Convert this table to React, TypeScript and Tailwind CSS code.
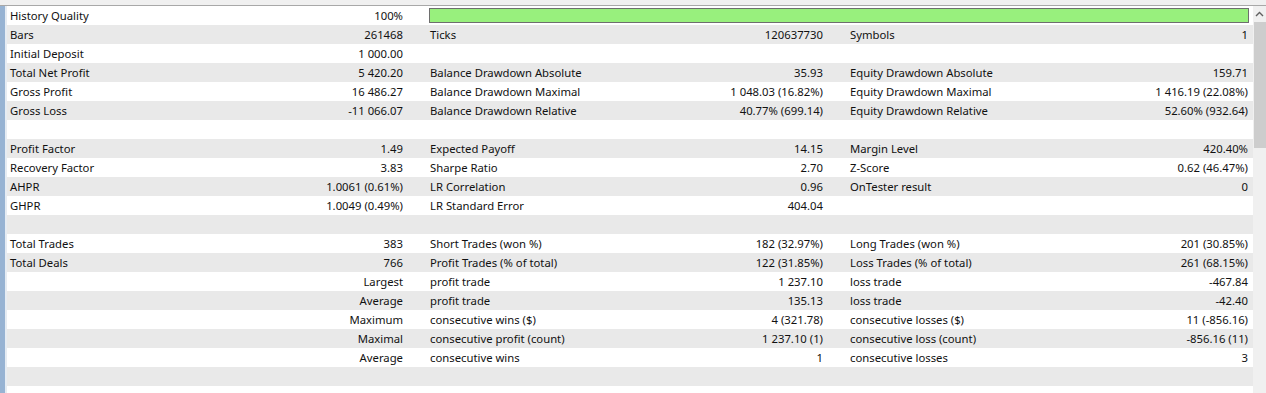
const rows: (string[] | null)[] = [
  ["History Quality", "100%", "", "", "", ""],
  ["Bars", "261468", "Ticks", "120637730", "Symbols", "1"],
  ["Initial Deposit", "1 000.00", "", "", "", ""],
  ["Total Net Profit", "5 420.20", "Balance Drawdown Absolute", "35.93", "Equity Drawdown Absolute", "159.71"],
  ["Gross Profit", "16 486.27", "Balance Drawdown Maximal", "1 048.03 (16.82%)", "Equity Drawdown Maximal", "1 416.19 (22.08%)"],
  ["Gross Loss", "-11 066.07", "Balance Drawdown Relative", "40.77% (699.14)", "Equity Drawdown Relative", "52.60% (932.64)"],
  null,
  ["Profit Factor", "1.49", "Expected Payoff", "14.15", "Margin Level", "420.40%"],
  ["Recovery Factor", "3.83", "Sharpe Ratio", "2.70", "Z-Score", "0.62 (46.47%)"],
  ["AHPR", "1.0061 (0.61%)", "LR Correlation", "0.96", "OnTester result", "0"],
  ["GHPR", "1.0049 (0.49%)", "LR Standard Error", "404.04", "", ""],
  null,
  ["Total Trades", "383", "Short Trades (won %)", "182 (32.97%)", "Long Trades (won %)", "201 (30.85%)"],
  ["Total Deals", "766", "Profit Trades (% of total)", "122 (31.85%)", "Loss Trades (% of total)", "261 (68.15%)"],
  ["", "Largest", "profit trade", "1 237.10", "loss trade", "-467.84"],
  ["", "Average", "profit trade", "135.13", "loss trade", "-42.40"],
  ["", "Maximum", "consecutive wins ($)", "4 (321.78)", "consecutive losses ($)", "11 (-856.16)"],
  ["", "Maximal", "consecutive profit (count)", "1 237.10 (1)", "consecutive loss (count)", "-856.16 (11)"],
  ["", "Average", "consecutive wins", "1", "consecutive losses", "3"],
  null,
];

const Cell = ({ label, value, last }: { label: string; value: string; last?: boolean }) => (
  <div className={`flex items-center justify-between pl-[3px] ${last ? "pr-[5px]" : "pr-[24px]"}`}>
    <span>{label}</span>
    <span>{value}</span>
  </div>
);

const Report = () => (
  <div className="flex-1">
    {rows.map((r, i) => (
      <div
        key={i}
        className={`grid h-[19px] grid-cols-[420px_420px_1fr] ${i % 2 === 1 ? "bg-[#e9e9e9]" : "bg-white"}`}
      >
        {r && i === 0 ? (
          <>
            <Cell label={r[0]} value={r[1]} />
            <div className="col-span-2 flex items-center pl-[2px] pr-[4px]">
              <div className="h-[15px] w-full border border-[#6e6e6e] bg-[#98f07d]" />
            </div>
          </>
        ) : r ? (
          <>
            <Cell label={r[0]} value={r[1]} />
            <Cell label={r[2]} value={r[3]} />
            <Cell label={r[4]} value={r[5]} last />
          </>
        ) : null}
      </div>
    ))}
  </div>
);

const ScrollBar = () => (
  <div className="flex w-[13px] flex-col bg-[#f0f0f0]">
    <div className="flex h-[16px] items-center justify-center">
      <svg width="9" height="6" viewBox="0 0 9 6" fill="none">
        <path d="M1 5L4.5 1.5L8 5" stroke="#606060" strokeWidth="1.4" />
      </svg>
    </div>
    <div className="ml-[1px] h-[126px] bg-[#cdcdcd]" />
  </div>
);

export default function App() {
  return (
    <div
      className="h-[393px] w-[1266px] overflow-hidden bg-white text-[11.3px] leading-none text-[#111]"
      style={{ fontFamily: '"Noto Sans", "Open Sans", sans-serif' }}
    >
      <div className="h-[6px] border-b border-[#a8a8a8] bg-[#f0f0f0]" />
      <div className="flex h-[387px]">
        <div className="w-[5px] bg-[#97b3d3]" />
        <div className="w-[2px] bg-[#e6ecf3]" />
        <Report />
        <ScrollBar />
      </div>
    </div>
  );
}
